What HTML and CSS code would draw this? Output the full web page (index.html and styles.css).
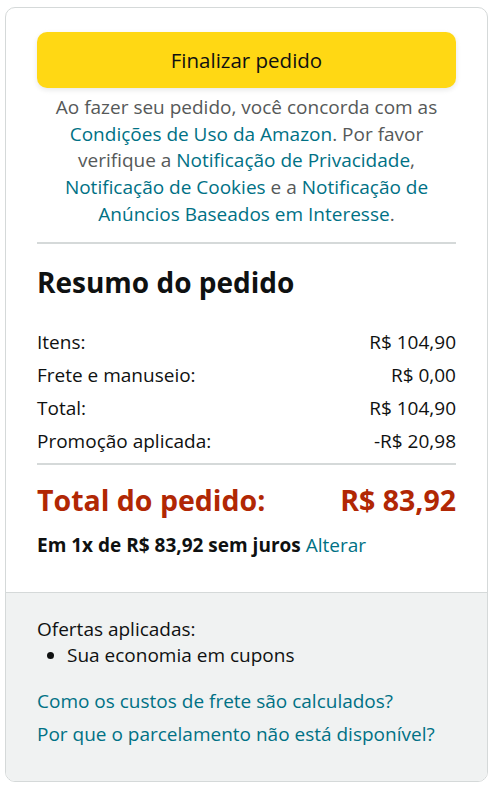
FILE: index.html
```html
<!DOCTYPE html>
<html>
<head>
  <title>Resumo do pedido</title>
  <link rel="stylesheet" href="styles.css">
</head>
<body>

<div class="box">
  <div class="box-main">
    <button class="place-order">Finalizar pedido</button>
    <p class="legal">
      Ao fazer seu pedido, você concorda com as
      <a href="#">Condições de Uso da Amazon</a>. Por favor verifique a
      <a href="#">Notificação de Privacidade</a>,
      <a href="#">Notificação de Cookies</a> e a
      <a href="#">Notificação de Anúncios Baseados em Interesse</a>.
    </p>

    <hr class="divider">

    <h2>Resumo do pedido</h2>
    <div class="rows">
      <div class="row"><span>Itens:</span><span>R$ 104,90</span></div>
      <div class="row"><span>Frete e manuseio:</span><span>R$ 0,00</span></div>
      <div class="row"><span>Total:</span><span>R$ 104,90</span></div>
      <div class="row"><span>Promoção aplicada:</span><span>-R$ 20,98</span></div>
    </div>

    <hr class="divider">

    <div class="row grand-total"><span>Total do pedido:</span><span>R$ 83,92</span></div>
    <p class="installments"><b>Em 1x de R$ 83,92 sem juros</b> <a href="#">Alterar</a></p>
  </div>

  <div class="box-footer">
    <p class="offers-title">Ofertas aplicadas:</p>
    <ul class="offers">
      <li>Sua economia em cupons</li>
    </ul>
    <a class="help" href="#">Como os custos de frete são calculados?</a>
    <a class="help" href="#">Por que o parcelamento não está disponível?</a>
  </div>
</div>

</body>
</html>
```

FILE: styles.css
```css
html, body {
  margin: 0;
  padding: 0;
  background: white;
  color: #0f1111;
  font-family: "Open Sans", "Noto Sans", sans-serif;
  font-size: 19px;
}

body {
  padding: 7px 12px 4px 5px;
}

a {
  color: #007185;
  text-decoration: none;
}

.box {
  border: 1px solid #d5d9d9;
  border-radius: 10px;
  overflow: hidden;
}

.box-main {
  padding: 24px 31px 35px 31px;
}

.place-order {
  display: block;
  width: 100%;
  height: 56px;
  background: #ffd814;
  border: none;
  border-radius: 10px;
  box-shadow: 0 2px 5px rgba(213, 217, 217, 0.6);
  font-family: inherit;
  font-size: 20.5px;
  color: #0f1111;
  cursor: pointer;
}

.legal {
  margin: 6px 0 0;
  text-align: center;
  font-size: 19px;
  line-height: 26.7px;
  color: #565959;
}

.divider {
  border: none;
  border-top: 2px solid #d5d9d9;
  margin: 14px 0 0;
}

h2 {
  margin: 20px 0 0;
  font-size: 28px;
  font-weight: 700;
  line-height: 36px;
}

.rows {
  margin: 26px 0 0;
}

.row {
  display: flex;
  justify-content: space-between;
  font-size: 19px;
  line-height: 33.3px;
}

.rows + .divider {
  margin-top: 4px;
}

.grand-total {
  margin-top: 17px;
  font-size: 28.5px;
  line-height: 36px;
  font-weight: 700;
  color: #b12704;
}

.installments {
  margin: 15px 0 0;
  font-size: 19px;
  line-height: 24px;
}

.box-footer {
  background: #f0f2f2;
  border-top: 1px solid #d5d9d9;
  padding: 23px 31px 29px;
  font-size: 19px;
}

.offers-title {
  margin: 0;
  line-height: 26.6px;
}

.offers {
  margin: 0;
  padding-left: 30px;
  line-height: 26.6px;
}

.help {
  display: block;
  line-height: 33.4px;
}

.offers + .help {
  margin-top: 16px;
}
```
